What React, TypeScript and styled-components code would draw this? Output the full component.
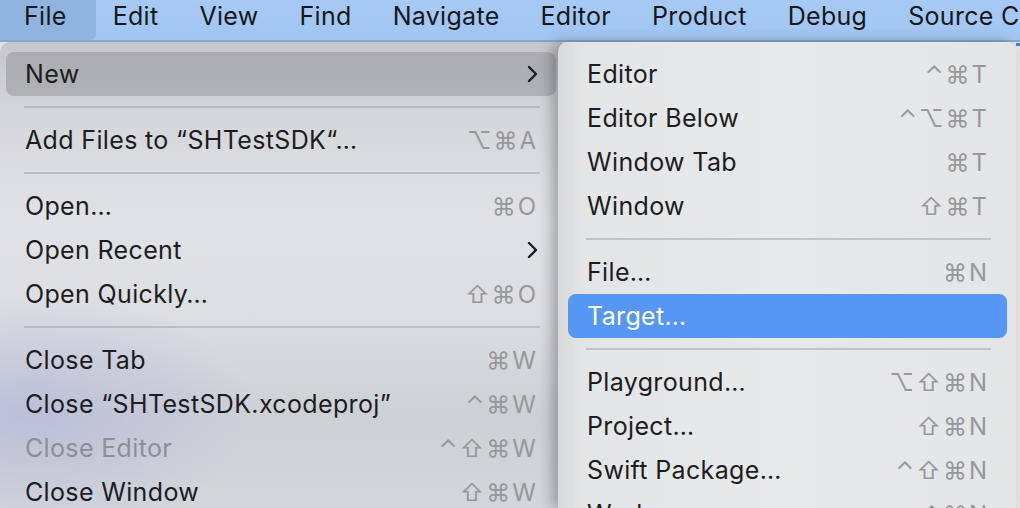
import React from 'react';
import styled, { createGlobalStyle } from 'styled-components';

const GlobalStyle = createGlobalStyle`
  html, body {
    margin: 0;
    padding: 0;
    overflow: hidden;
    background: #e4e4e4;
  }
`;

type Item =
  | { kind: 'sep' }
  | {
      kind: 'item';
      label: string;
      keys?: string;
      sub?: boolean;
      disabled?: boolean;
      hl?: 'gray' | 'blue';
    };

const fileMenu: Item[] = [
  { kind: 'item', label: 'New', sub: true, hl: 'gray' },
  { kind: 'sep' },
  { kind: 'item', label: 'Add Files to “SHTestSDK“…', keys: '⌥⌘A' },
  { kind: 'sep' },
  { kind: 'item', label: 'Open…', keys: '⌘O' },
  { kind: 'item', label: 'Open Recent', sub: true },
  { kind: 'item', label: 'Open Quickly…', keys: '⇧⌘O' },
  { kind: 'sep' },
  { kind: 'item', label: 'Close Tab', keys: '⌘W' },
  { kind: 'item', label: 'Close “SHTestSDK.xcodeproj”', keys: '⌃⌘W' },
  { kind: 'item', label: 'Close Editor', keys: '⌃⇧⌘W', disabled: true },
  { kind: 'item', label: 'Close Window', keys: '⇧⌘W' },
];

const newMenu: Item[] = [
  { kind: 'item', label: 'Editor', keys: '⌃⌘T' },
  { kind: 'item', label: 'Editor Below', keys: '⌃⌥⌘T' },
  { kind: 'item', label: 'Window Tab', keys: '⌘T' },
  { kind: 'item', label: 'Window', keys: '⇧⌘T' },
  { kind: 'sep' },
  { kind: 'item', label: 'File…', keys: '⌘N' },
  { kind: 'item', label: 'Target…', hl: 'blue' },
  { kind: 'sep' },
  { kind: 'item', label: 'Playground…', keys: '⌥⇧⌘N' },
  { kind: 'item', label: 'Project…', keys: '⇧⌘N' },
  { kind: 'item', label: 'Swift Package…', keys: '⌃⇧⌘N' },
  { kind: 'item', label: 'Workspace…', keys: '⌃⌘N' },
];

const barItems = ['File', 'Edit', 'View', 'Find', 'Navigate', 'Editor', 'Product', 'Debug', 'Source Control'];

const Chevron = () => (
  <svg width="12" height="18" viewBox="0 0 12 18">
    <path d="M3 2 L10 9 L3 16" fill="none" stroke="#1d1d1f" strokeWidth="2.4" strokeLinecap="round" strokeLinejoin="round" />
  </svg>
);

const MenuList = ({ items }: { items: Item[] }) => (
  <>
    {items.map((it, i) =>
      it.kind === 'sep' ? (
        <Separator key={i} />
      ) : (
        <Row key={i} $hl={it.hl}>
          <Label $disabled={it.disabled} $hl={it.hl}>{it.label}</Label>
          {it.sub ? <Chevron /> : it.keys ? <Keys>{it.keys}</Keys> : null}
        </Row>
      )
    )}
  </>
);

export default function App() {
  return (
    <Screen>
      <GlobalStyle />
      <MenuBar>
        {barItems.map((b, i) => (
          <BarItem key={b} $active={i === 0}>{b}</BarItem>
        ))}
      </MenuBar>
      <Desk>
        <FileMenu>
          <MenuList items={fileMenu} />
        </FileMenu>
        <SubMenu>
          <MenuList items={newMenu} />
        </SubMenu>
        <Backdrop />
      </Desk>
    </Screen>
  );
}

const Screen = styled.div`
  width: 1020px;
  height: 508px;
  overflow: hidden;
  display: flex;
  flex-direction: column;
  font-family: Inter, "Noto Sans", "DejaVu Sans", sans-serif;
  color: #1d1d1f;
`;

const MenuBar = styled.div`
  height: 40px;
  flex: none;
  display: flex;
  align-items: stretch;
  white-space: nowrap;
  overflow: hidden;
  background: linear-gradient(180deg, #a6caf4 0%, #a1c6f1 100%);
  border-bottom: 2px solid #86a6cc;
`;

const BarItem = styled.div<{ $active?: boolean }>`
  display: flex;
  align-items: center;
  padding: ${p => (p.$active ? '0 25px 8px 24px' : '0 20px 8px 21px')};
  font-size: 25px;
  letter-spacing: 0.3px;
  color: #16181c;
  background: ${p => (p.$active ? '#8fb4df' : 'transparent')};
  box-shadow: ${p => (p.$active ? '4px 0 0 #8fb4df' : 'none')};
  border-bottom-right-radius: ${p => (p.$active ? '6px' : '0')};
`;

const Desk = styled.div`
  flex: 1;
  display: flex;
  align-items: stretch;
  min-height: 0;
`;

const FileMenu = styled.div`
  width: 562px;
  flex: none;
  box-sizing: border-box;
  padding: 10px 6px 0 6px;
  border-top-left-radius: 10px;
  background:
    radial-gradient(ellipse 220px 120px at 6% 80%, rgba(170, 178, 220, 0.55), rgba(170, 178, 220, 0) 100%),
    linear-gradient(180deg, #c6c7ca 0%, #d3d5d8 14%, #e0e2e5 38%, #dcdee2 58%, #cdd0d5 80%, #d3d6da 100%);
`;

const SubMenu = styled.div`
  width: 458px;
  flex: none;
  margin-left: -4px;
  box-sizing: border-box;
  padding: 10px 9px 0 10px;
  border-top-left-radius: 10px;
  border-top-right-radius: 10px;
  position: relative;
  z-index: 1;
  background: linear-gradient(90deg, #d9dadc 0%, #e3e5e7 6%, #e7e9ea 50%, #e3e5e6 100%);
  box-shadow: -6px 0 14px rgba(0, 0, 0, 0.28);
`;

const Backdrop = styled.div`
  flex: 1;
  background: #e6e6e6;
  border-top: 3px solid #3c82e6;
  margin-top: 1px;
`;

const Row = styled.div<{ $hl?: 'gray' | 'blue' }>`
  height: 44px;
  display: flex;
  align-items: center;
  justify-content: space-between;
  padding: 0 18px 0 19px;
  border-radius: 8px;
  background: ${p => (p.$hl === 'gray' ? 'rgba(150, 150, 154, 0.55)' : p.$hl === 'blue' ? '#5797f4' : 'transparent')};
`;

const Label = styled.span<{ $disabled?: boolean; $hl?: 'gray' | 'blue' }>`
  font-size: 25px;
  letter-spacing: 0.35px;
  white-space: nowrap;
  color: ${p => (p.$hl === 'blue' ? '#ffffff' : p.$disabled ? '#8c8f96' : '#1d1d1f')};
`;

const Keys = styled.span`
  font-size: 24px;
  letter-spacing: 2px;
  color: #97989c;
  white-space: nowrap;
`;

const Separator = styled.div`
  height: 2px;
  margin: 10px 16px 10px 18px;
  background: rgba(150, 152, 158, 0.45);
`;
